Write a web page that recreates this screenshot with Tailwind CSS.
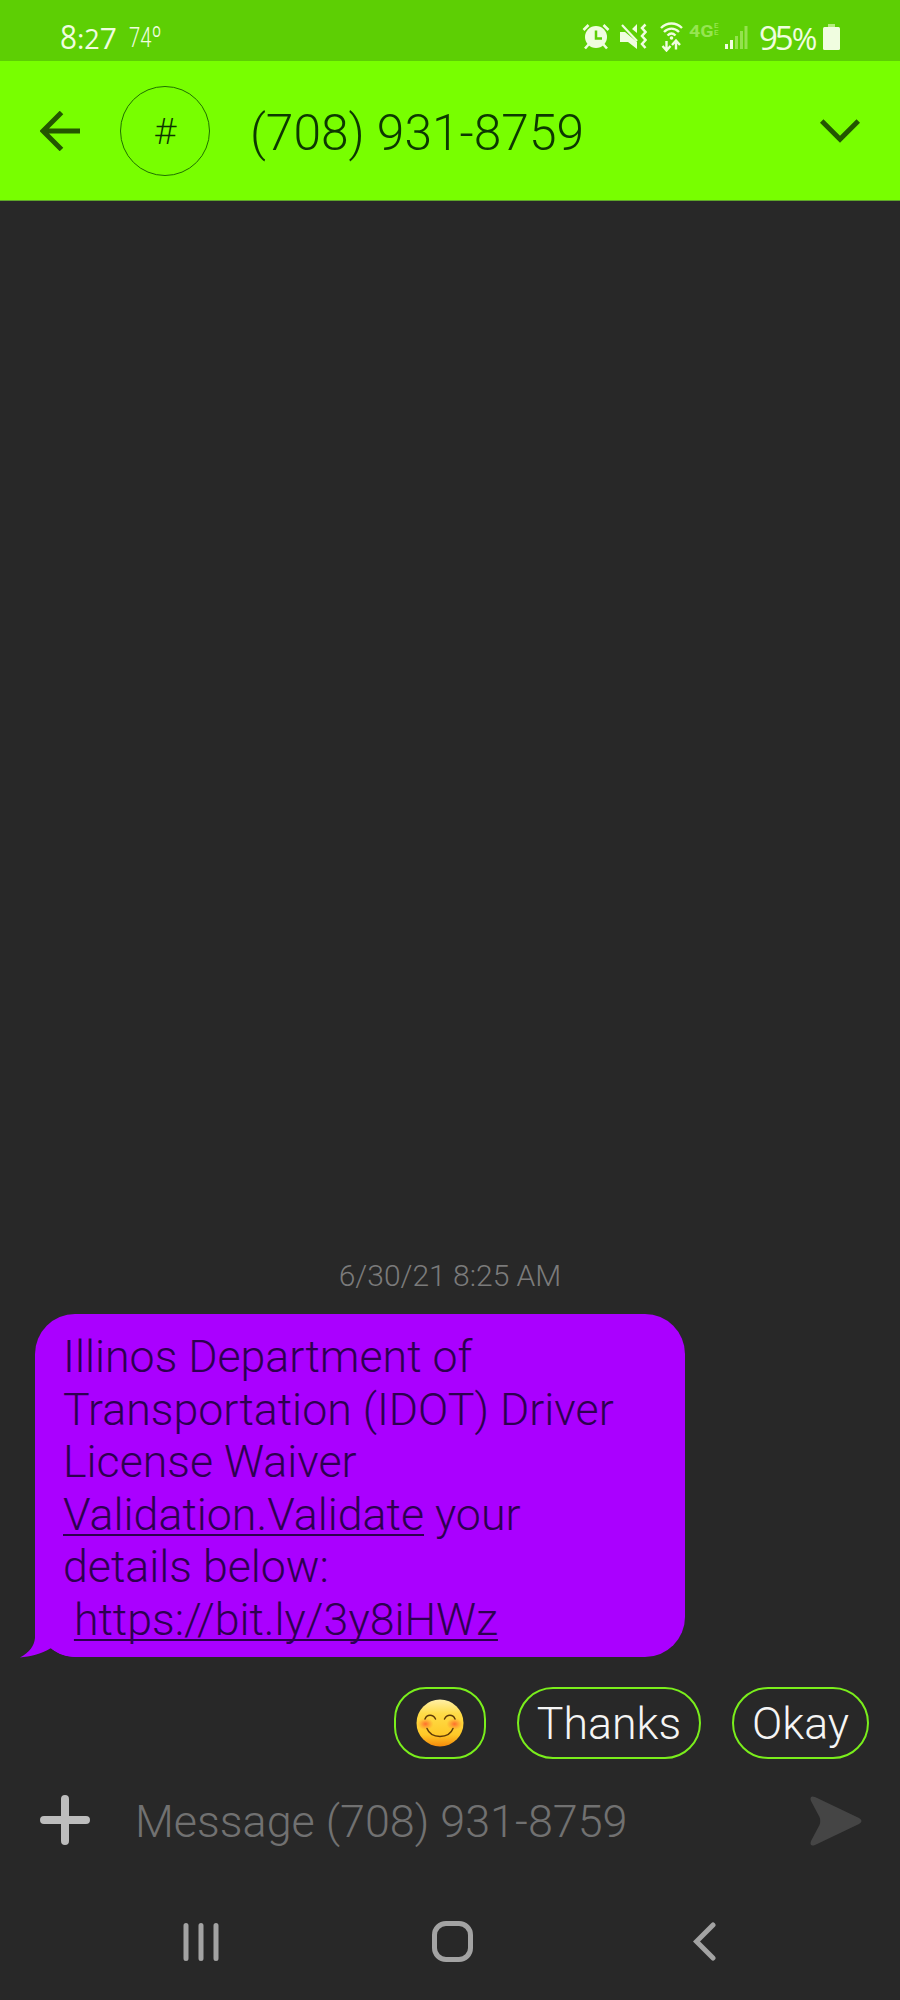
<!DOCTYPE html>
<html lang="en">
<head>
    <meta charset="UTF-8">
    <meta name="viewport" content="width=device-width, initial-scale=1.0">
    <title>Messages</title>
    <script src="https://cdn.jsdelivr.net/npm/@tailwindcss/browser@4"></script>
</head>
<body class="bg-[#282828]">
    <div class="flex h-[2000px] w-[900px] flex-col overflow-hidden bg-[#282828] font-['Roboto',sans-serif] font-light">

        <!-- Status bar -->
        <div class="flex h-[61px] shrink-0 items-start justify-between bg-[#5dcf04] pr-[60px] pl-[60px] text-[#f0fde0]">
            <div class="flex pt-[21px]">
                <div class="flex w-[69px] items-baseline font-['Open_Sans',sans-serif] leading-8 font-medium">
                    <span class="origin-left scale-x-90 text-[33px]">8</span><span class="-ml-0.5 text-[28px]">:</span><span class="text-[27px]">2</span><span class="text-[30px]">7</span>
                </div>
                <span class="origin-left scale-x-75 text-[27px] leading-8 font-light">74<span class="text-[30px]">º</span></span>
            </div>
            <div class="flex pt-[22px]">
                <!-- Alarm -->
                <svg class="mr-[10px] h-[29px] w-[28px]" viewBox="0 0 28 29" fill="none">
                    <circle cx="14" cy="15" r="11" fill="currentColor"/>
                    <path d="M1.500 8l5-5M26.500 8l-5-5M7 22l-4 4.500M21 22l4 4.500" stroke="currentColor" stroke-width="2.600"/>
                    <path d="M14 8.500v8h6" stroke="#5dcf04" stroke-width="2.500"/>
                </svg>
                <!-- Vibrate -->
                <svg class="mr-[13px] h-[29px] w-[27px]" viewBox="0 0 27 29" fill="none">
                    <path d="M0 10h5l12 10v7l-9-7H0zM12 7l5-5v9z" fill="currentColor"/>
                    <path d="M2 3l15 16" stroke="currentColor" stroke-width="2.200"/>
                    <path d="M25.500 2.500l-3.500 3.500 3.500 4-3.500 4 3.500 4-3.500 4 3.500 4" stroke="currentColor" stroke-width="2.500"/>
                </svg>
                <!-- Wifi -->
                <svg class="mr-[6px] h-[30px] w-[23px]" viewBox="0 0 23 30" fill="none" stroke="currentColor">
                    <path d="M1 6c6-6 15-6 21 0M4 10c4.500-4.500 10.500-4.500 15 0M7.500 13.500c2.500-2.500 5.500-2.500 8 0" stroke-width="2.400"/>
                    <circle cx="11.500" cy="16" r="1.800" fill="currentColor" stroke="none"/>
                    <path d="M6.500 19v9M2.500 24l4 4.500 4-4.500M16 27.500V18.500M12 23l4-4.500 4 4.500" stroke-width="2.400"/>
                </svg>
                <div class="mr-[5px] flex h-[18px] w-[31px] text-[#96e551]">
                    <span class="w-[25px] origin-left scale-x-115 text-[17px] leading-[19px] font-bold">4G</span>
                    <span class="text-[8px] leading-[7px] font-medium"><span class="block">E</span><span class="block">E</span></span>
                </div>
                <!-- Signal -->
                <svg class="mr-[11px] h-[29px] w-[23px]" viewBox="0 0 23 29" fill="currentColor">
                    <path d="M0 22h3v5H0zM5 18h3v9H5z"/>
                    <path d="M10 14h3v13h-3zM15 9h3v18h-3zM19.500 4h3v23h-3z" fill="#94e24e"/>
                </svg>
                <div class="flex w-[64px] items-baseline font-['Open_Sans',sans-serif] leading-8 font-medium">
                    <span class="text-[33px] tracking-[-3px]">95</span><span class="ml-px origin-left scale-x-100 text-[31px]">%</span>
                </div>
                <!-- Battery -->
                <svg class="h-[29px] w-[17px]" viewBox="0 0 17 29" fill="currentColor">
                    <path d="M5 2h7v3H5z" fill="#b5ed7e"/>
                    <rect y="5" width="17" height="23" rx="1.500"/>
                </svg>
            </div>
        </div>

        <!-- Conversation header -->
        <div class="flex h-[140px] shrink-0 items-center border-b border-[#5fa72a] bg-[#78ff00] px-10">
            <svg class="h-10 w-10" viewBox="0 0 40 40" fill="none" stroke="#235600" stroke-width="5">
                <path d="M21.500 1.500L3 20l18.500 18.500M3 20h37"/>
            </svg>
            <div class="ml-10 flex h-[90px] w-[90px] items-center justify-center rounded-full border border-[#1f7000] pl-0.5 font-['Open_Sans',sans-serif] text-[36px] text-[#0c3300]">#</div>
            <h1 class="ml-10 pt-[5px] text-[49.7px] text-[#0d3800]">(708) 931-8759</h1>
            <svg class="ml-auto h-6 w-10" viewBox="0 0 40 24" fill="none" stroke="#235600" stroke-width="5">
                <path d="M1.700 2L20 20.300 38.300 2"/>
            </svg>
        </div>

        <!-- Messages -->
        <div class="flex flex-1 flex-col justify-end">
            <p class="mb-[20px] text-center text-[30px] leading-[36px] text-[#7b7b7b]">6/30/21 8:25 AM</p>
            <div class="relative ml-[35px] h-[343px] w-[650px] rounded-[40px] bg-[#aa00ff] pt-[17px] pl-[28px] text-[44.7px] leading-[52.5px] text-[#2d0050]">
                <!-- Bubble tail -->
                <svg class="absolute -bottom-px -left-[15px] h-[60px] w-[60px]" viewBox="0 0 60 60" fill="none">
                    <path d="M15 0v40C14 48 10 54 0 59.500 10 58.500 21 56.500 31 50c8 6 15 8.500 25 9V0z" fill="#aa00ff"/>
                    <path d="M2 60c12-1 20-3 29-9.500 8 6.500 14 8.500 24 9.500z" fill="#282828"/>
                </svg>
                <p class="relative whitespace-pre">Illinos Department of
Transportation (IDOT) Driver
License Waiver
<a class="underline decoration-2 underline-offset-4 [text-decoration-skip-ink:none]">Validation.Validate</a> your
details below:
 <a class="underline decoration-2 underline-offset-4 [text-decoration-skip-ink:none]">https://bit.ly/3y8iHWz</a></p>
            </div>
        </div>

        <!-- Quick replies -->
        <div class="mt-[30px] flex h-[72px] shrink-0 justify-end gap-[31px] pr-[31px] text-[44.7px] text-[#f5f5f5]">
            <button class="flex w-[92px] items-center justify-center rounded-[32px] border-2 border-[#7aee1c]">
                <svg class="h-12 w-12" viewBox="0 0 48 48" fill="none">
                    <defs>
                        <linearGradient id="face" x1="0" y1="0" x2="0" y2="1">
                            <stop offset="0" stop-color="#fff0a8"/>
                            <stop offset=".3" stop-color="#ffdc48"/>
                            <stop offset=".75" stop-color="#ffc928"/>
                            <stop offset="1" stop-color="#f58a0b"/>
                        </linearGradient>
                        <radialGradient id="cheek">
                            <stop offset="0" stop-color="#ff6d2d"/>
                            <stop offset="1" stop-color="#ff8a2d" stop-opacity="0"/>
                        </radialGradient>
                    </defs>
                    <circle cx="24" cy="24" r="23.500" fill="url(#face)"/>
                    <ellipse cx="9.500" cy="25" rx="8" ry="6" fill="url(#cheek)"/>
                    <ellipse cx="38.500" cy="25" rx="8" ry="6" fill="url(#cheek)"/>
                    <path d="M9 20c2-5 8-5 10.500 0M28.500 20c2.500-5 8.500-5 10.500 0M11 29.500c4 10.500 22 10.500 26 0" stroke="#5f3a08" stroke-width="1.500" stroke-linecap="round"/>
                </svg>
            </button>
            <button class="w-[184px] rounded-[36px] border-2 border-[#7aee1c] pt-[2px]">Thanks</button>
            <button class="w-[137px] rounded-[36px] border-2 border-[#7aee1c] pt-[2px]">Okay</button>
        </div>

        <!-- Compose -->
        <div class="mt-[26px] flex h-[70px] shrink-0 items-center pr-[38px] pl-10">
            <svg class="h-[50px] w-[50px]" viewBox="0 0 50 50" stroke="#bdbdbd" stroke-width="8" stroke-linecap="round">
                <path d="M25 4v42M4 25h42"/>
            </svg>
            <span class="ml-[45px] pt-[4px] text-[44.9px] text-[#717171]">Message (708) 931-8759</span>
            <svg class="ml-auto mt-px h-[50px] w-[52px]" viewBox="0 0 52 50" fill="#454545">
                <path d="M5 1L49 22Q54 25 49 28L5 49Q-1 51 1 45L9.500 29Q11 25 9.500 21L1 5Q-1-1 5 1z"/>
            </svg>
        </div>

        <!-- Navigation bar -->
        <div class="mt-[67px] flex h-[78px] shrink-0 items-start pl-[183px]">
            <svg class="mt-px h-[38px] w-9" viewBox="0 0 36 38" stroke="#a3a3a3" stroke-width="5" stroke-linecap="round">
                <path d="M3 2.500v33M18 2.500v33M33 2.500v33"/>
            </svg>
            <div class="-mt-px ml-[213px] h-[41px] w-[41px] rounded-[14px] border-5 border-[#a3a3a3]"></div>
            <svg class="ml-[220px] h-[39px] w-[23px]" viewBox="0 0 23 39" fill="none" stroke="#a3a3a3" stroke-width="5" stroke-linecap="round">
                <path d="M20 3L3.500 19.500 20 36"/>
            </svg>
        </div>
    </div>
</body>
</html>
